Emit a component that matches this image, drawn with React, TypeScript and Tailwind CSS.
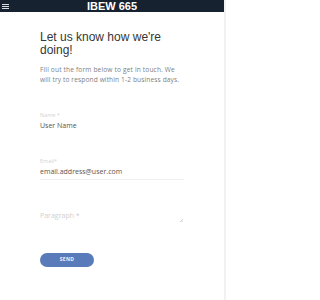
import { useState } from 'react';

export default function App() {
  const [form, setForm] = useState({ name: 'User Name', email: 'email.address@user.com', message: '' });

  return (
    <div className="flex min-h-[300px] w-[226px] bg-white">
      <div className="w-[224px]">
        {/* Top bar */}
        <header className="grid h-[12px] grid-cols-[1fr_auto_1fr] items-center bg-[#172231]">
          <button className="ml-[2px] flex w-[7px] flex-col gap-[1px]" aria-label="Menu">
            <span className="h-[1px] w-full bg-[#d9dce0]" />
            <span className="h-[1px] w-full bg-[#d9dce0]" />
            <span className="h-[1px] w-full bg-[#d9dce0]" />
          </button>
          <h1 className="text-[11px] font-bold leading-[12px] text-white [font-family:'Liberation_Sans',Arial,sans-serif]">
            IBEW 665
          </h1>
          <div />
        </header>

        <main className="w-[184px] pl-[40px]">
          <h2 className="mt-[19px] text-[12px] leading-[13px] text-[#363636] [font-family:'Liberation_Sans',Arial,sans-serif]">
            Let us know how we're doing!
          </h2>
          <p className="mt-[8px] whitespace-nowrap text-[6.6px] leading-[10px] text-[#808080] [font-family:'Open_Sans',sans-serif]">
            <span className="block tracking-[0.15px]">Fill out the form below to get in touch. We</span>
            <span className="block tracking-[0.12px]">will try to respond within 1-2 business days.</span>
          </p>

          <form className="[font-family:'Open_Sans',sans-serif]" onSubmit={(e) => e.preventDefault()}>
            <label className="mt-[26px] block">
              <span className="block text-[5.5px] leading-[9px] text-[#d4d4d4]">Name *</span>
              <input
                className="mt-[1px] block h-[10px] w-full p-0 text-[7px] leading-[10px] text-[#555] outline-none"
                value={form.name}
                onChange={(e) => setForm({ ...form, name: e.target.value })}
              />
            </label>

            <label className="mt-[26px] block">
              <span className="block text-[5.5px] leading-[9px] text-[#d4d4d4]">Email*</span>
              <input
                className="mt-[1px] box-content block h-[10px] w-full border-b border-[#efefef] p-0 pb-[2px] text-[7px] leading-[10px] text-[#555] outline-none"
                value={form.email}
                onChange={(e) => setForm({ ...form, email: e.target.value })}
              />
            </label>

            <div className="relative mt-[31px]">
              <textarea
                className="block h-[14px] w-full resize-none p-0 text-[7px] leading-[10px] text-[#505050] outline-none placeholder:text-[#d0d0d0]"
                placeholder="Paragraph *"
                value={form.message}
                onChange={(e) => setForm({ ...form, message: e.target.value })}
              />
              <svg className="absolute right-[1px] top-[8px] h-[3px] w-[3px]" viewBox="0 0 3 3">
                <path d="M3 0 L0 3 M3 1.5 L1.5 3" stroke="#b5b5b5" strokeWidth="0.6" />
              </svg>
            </div>

            <button
              type="submit"
              className="mt-[28px] flex h-[14px] w-[54px] items-center justify-center rounded-full bg-[#5a7bba] text-[5px] font-bold tracking-[0.3px] text-[#eef2fa]"
            >
              SEND
            </button>
          </form>
        </main>
      </div>
      <div className="flex-1 bg-[#f1f1f1]" />
    </div>
  );
}
